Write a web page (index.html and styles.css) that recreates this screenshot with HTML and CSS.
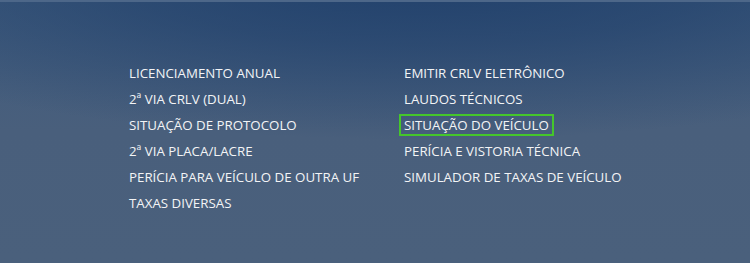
FILE: index.html
```html
<!DOCTYPE html>
<html lang="pt-BR">
<head>
<meta charset="utf-8">
<link rel="stylesheet" href="styles.css">
</head>
<body>
<footer class="footer">
  <div class="topline"></div>
  <nav class="links">
    <ul class="col">
      <li><a href="#">LICENCIAMENTO ANUAL</a></li>
      <li><a href="#">2ª VIA CRLV (DUAL)</a></li>
      <li><a href="#">SITUAÇÃO DE PROTOCOLO</a></li>
      <li><a href="#">2ª VIA PLACA/LACRE</a></li>
      <li><a href="#">PERÍCIA PARA VEÍCULO DE OUTRA UF</a></li>
      <li><a href="#">TAXAS DIVERSAS</a></li>
    </ul>
    <ul class="col">
      <li><a href="#">EMITIR CRLV ELETRÔNICO</a></li>
      <li><a href="#">LAUDOS TÉCNICOS</a></li>
      <li><a href="#" class="highlight">SITUAÇÃO DO VEÍCULO</a></li>
      <li><a href="#">PERÍCIA E VISTORIA TÉCNICA</a></li>
      <li><a href="#">SIMULADOR DE TAXAS DE VEÍCULO</a></li>
    </ul>
  </nav>
</footer>
</body>
</html>
```
FILE: styles.css
```css
html, body {
  margin: 0;
  padding: 0;
  width: 750px;
  height: 263px;
  overflow: hidden;
}
.footer {
  width: 750px;
  height: 263px;
  box-sizing: border-box;
  font-family: "Open Sans", "Liberation Sans", sans-serif;
  background:
    radial-gradient(ellipse 680px 170px at 420px -30px, rgba(30, 62, 106, 0.95) 0%, rgba(30, 62, 106, 0.6) 45%, rgba(30, 62, 106, 0) 100%),
    linear-gradient(to bottom, #405c7e 0%, #495f7c 50%, #4a607c 100%);
}
.topline {
  height: 2px;
  background: #4d6789;
}
.links {
  display: flex;
  padding: 60px 0 0 129px;
}
.col {
  list-style: none;
  margin: 0;
  padding: 0;
  width: 275px;
}
.col li {
  height: 26px;
  line-height: 20px;
}
.col a {
  color: #f3f4f6;
  text-decoration: none;
  font-size: 13.3px;
  white-space: nowrap;
}
.col a.highlight {
  display: inline-block;
  margin-left: -5px;
  padding: 0 3px 0 3px;
  line-height: 18px;
  border: 2px solid #45c62b;
}
```
